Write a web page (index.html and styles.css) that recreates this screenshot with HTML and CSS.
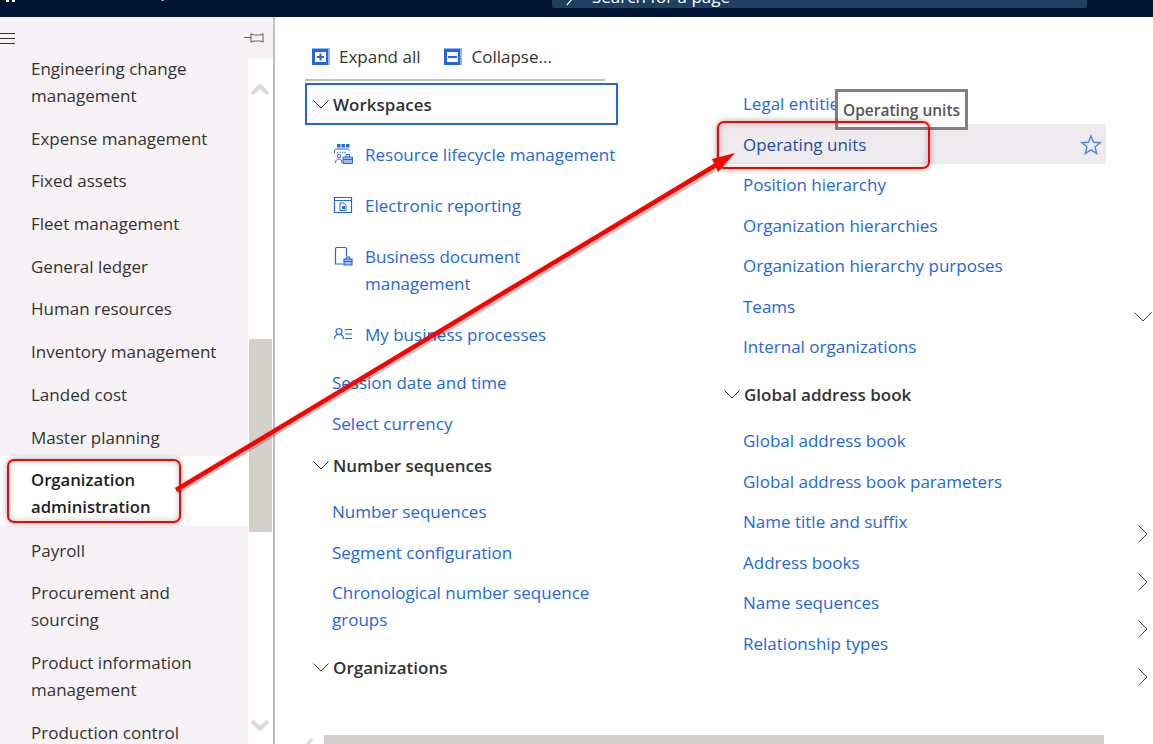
FILE: index.html
```html
<!DOCTYPE html>
<html lang="en">
<head>
<meta charset="utf-8">
<title>Organization administration</title>
<link rel="stylesheet" href="styles.css">
</head>
<body>
<div class="app">
  <header class="topbar">
    <div class="waffle"><i></i><i></i></div>
    <div class="brand">Finance and Operations</div>
    <div class="search">
      <svg class="search-ic" width="8" height="8" viewBox="0 0 8 8"><path d="M1 7 6 1" stroke="#fff" stroke-width="1.2" fill="none"/></svg>
      <span>Search for a page</span>
    </div>
  </header>
  <div class="main">
    <nav class="nav">
      <div class="nav-head">
        <svg width="16" height="12" viewBox="0 0 16 12"><path d="M0 1.500h15M0 6.500h15M0 11.500h15" stroke="#333" stroke-width="1" fill="none"/></svg>
        <svg width="20" height="12" viewBox="0 0 20 12"><path d="M0 6h7M7 2.500 10 3.500h6l3-1v8l-3-1h-6l-3 1z" stroke="#666" stroke-width="1.100" fill="none" transform="translate(0 -.5)"/></svg>
      </div>
      <div class="nav-body">
        <ul class="modules">
          <li>Engineering change management</li>
          <li>Expense management</li>
          <li>Fixed assets</li>
          <li>Fleet management</li>
          <li>General ledger</li>
          <li>Human resources</li>
          <li>Inventory management</li>
          <li>Landed cost</li>
          <li>Master planning</li>
          <li class="active">Organization administration</li>
          <li>Payroll</li>
          <li>Procurement and sourcing</li>
          <li>Product information management</li>
          <li>Production control</li>
        </ul>
        <div class="vscroll">
          <svg class="vs-up" width="20" height="14" viewBox="0 0 20 14"><path d="M2 12 10 4l8 8" stroke="#dedbd6" stroke-width="4" fill="none"/></svg>
          <div class="vs-thumb"></div>
          <svg class="vs-down" width="20" height="14" viewBox="0 0 20 14"><path d="M2 2l8 8 8-8" stroke="#dedbd6" stroke-width="4" fill="none"/></svg>
        </div>
      </div>
    </nav>
    <section class="content">
      <div class="toolbar">
        <button class="tool">
          <svg width="18" height="17" viewBox="0 0 18 17"><path d="M0 0h18v17H0z" fill="#8fb3f0"/><path d="M0 1h16v16H0z" fill="#2266e3"/><path d="M3 4h11v10H3z" fill="#fff"/><path d="M8.500 5.500v7M5 9h7" stroke="#2266e3" stroke-width="2"/></svg>
          Expand all
        </button>
        <button class="tool">
          <svg width="18" height="17" viewBox="0 0 18 17"><path d="M0 0h18v17H0z" fill="#8fb3f0"/><path d="M0 1h16v16H0z" fill="#2266e3"/><path d="M3 4h11v10H3z" fill="#fff"/><path d="M4 9h9" stroke="#2266e3" stroke-width="2"/></svg>
          Collapse...
        </button>
      </div>
      <div class="rule"></div>
      <div class="columns">
        <div class="col col-left">
          <div class="group-head focus"><svg class="caret" width="16" height="9" viewBox="0 0 16 9"><path d="M.5.500 8 8 15.500.5" stroke="#333" fill="none"/></svg>Workspaces</div>
          <a class="link ws">
            <svg width="20" height="20" viewBox="0 0 20 20" fill="none" stroke="#2266e3"><path d="M4 0h3.500v3.500H4zM8.500 0H12v3.500H8.500zM13 0h3.500v3.500H13z" fill="#2266e3" stroke="none"/><path d="M1.500 9V7c0-1 1-2 2-2h11c1 0 2 1 2 2" /><path d="M4 8.500h1M6.500 8.500h1M9 8.500h1M11.500 8.500h1" stroke-width="1.500"/><circle cx="6" cy="12" r="1.800"/><path d="M2.500 19c0-3 1.500-4 3.500-4s3 1 3 4"/><path d="M10 13h9.500v6.500H10z" fill="#9dbcf2"/><path d="M13 13v-2.500h3.500V13M10 15.500h9.500"/></svg>
            <span>Resource lifecycle management</span>
          </a>
          <a class="link ws">
            <svg width="20" height="20" viewBox="0 0 20 20" fill="none" stroke="#2266e3"><path d="M1.500 2.500h17v15h-17zM1.500 5.500h17" stroke-width="1.200"/><path d="M7 8h4l2 2v5.500H7z"/><path d="M9 11h3v3H9z" fill="#2266e3" stroke="none"/></svg>
            <span>Electronic reporting</span>
          </a>
          <a class="link ws">
            <svg width="20" height="20" viewBox="0 0 20 20" fill="none" stroke="#2266e3" stroke-width="1.200"><path d="M10 18H2.500V3c0-1 .5-1.500 1.500-1.500h8c1 0 1.500.5 1.500 1.500v7"/><path d="M11 13h8v6h-8z" fill="#9dbcf2"/><path d="M13.500 13v-2h3v2M11 15.500h8"/></svg>
            <span>Business document management</span>
          </a>
          <a class="link ws">
            <svg width="20" height="20" viewBox="0 0 20 20" fill="none" stroke="#2266e3" stroke-width="1.200"><circle cx="6" cy="7.500" r="3"/><path d="M1.500 15c0-3 2-4.500 4.500-4.500s4.500 1.500 4.500 4.500M12 5.500h7M12 10h7M12 14.500h7"/></svg>
            <span>My business processes</span>
          </a>
          <a class="link">Session date and time</a>
          <a class="link">Select currency</a>
          <div class="group-head tight"><svg class="caret" width="16" height="9" viewBox="0 0 16 9"><path d="M.5.500 8 8 15.500.5" stroke="#333" fill="none"/></svg>Number sequences</div>
          <a class="link">Number sequences</a>
          <a class="link">Segment configuration</a>
          <a class="link">Chronological number sequence groups</a>
          <div class="group-head"><svg class="caret" width="16" height="9" viewBox="0 0 16 9"><path d="M.5.500 8 8 15.500.5" stroke="#333" fill="none"/></svg>Organizations</div>
        </div>
        <div class="col col-right">
          <a class="link">Legal entities</a>
          <a class="link hover">Operating units
            <svg class="star" width="22" height="22" viewBox="0 0 22 22"><path d="M11 2l2.500 6.300 6.700.4-5.200 4.300 1.700 6.500L11 15.900l-5.700 3.600L7 13 1.800 8.700l6.700-.4z" fill="none" stroke="#4f86e8" stroke-width="1.400"/></svg>
          </a>
          <a class="link">Position hierarchy</a>
          <a class="link">Organization hierarchies</a>
          <a class="link">Organization hierarchy purposes</a>
          <a class="link">Teams</a>
          <a class="link">Internal organizations</a>
          <div class="group-head"><svg class="caret" width="16" height="9" viewBox="0 0 16 9"><path d="M.5.500 8 8 15.500.5" stroke="#333" fill="none"/></svg>Global address book</div>
          <a class="link">Global address book</a>
          <a class="link">Global address book parameters</a>
          <a class="link">Name title and suffix</a>
          <a class="link">Address books</a>
          <a class="link">Name sequences</a>
          <a class="link">Relationship types</a>
        </div>
      </div>
      <div class="hscroll">
        <svg class="hs-left" width="16" height="10" viewBox="0 0 16 10"><path d="M12 1 5 9" stroke="#dedbd6" stroke-width="3" fill="none"/></svg>
        <div class="hs-thumb"></div>
      </div>
    </section>
  </div>

  <div class="tooltip">Operating units</div>
  <svg class="edge-ic edge-down" width="18" height="10" viewBox="0 0 18 10"><path d="M.5.500 9 9l8.500-8.500" stroke="#444" fill="none"/></svg>
  <svg class="edge-ic edge-1" width="10" height="18" viewBox="0 0 10 18"><path d="M.5.500 9 9 .5 17.500" stroke="#444" fill="none"/></svg>
  <svg class="edge-ic edge-2" width="10" height="18" viewBox="0 0 10 18"><path d="M.5.500 9 9 .5 17.500" stroke="#444" fill="none"/></svg>
  <svg class="edge-ic edge-3" width="10" height="18" viewBox="0 0 10 18"><path d="M.5.500 9 9 .5 17.500" stroke="#444" fill="none"/></svg>
  <svg class="edge-ic edge-4" width="10" height="18" viewBox="0 0 10 18"><path d="M.5.500 9 9 .5 17.500" stroke="#444" fill="none"/></svg>

  <div class="callout callout-nav"></div>
  <div class="callout callout-link"></div>
  <svg class="arrow" width="1153" height="744" viewBox="0 0 1153 744">
    <path d="M176 490 714 167" stroke="#000" stroke-opacity=".22" stroke-width="5" fill="none" transform="translate(1 2)"/>
    <path d="M176 490 716 165" stroke="#fe0000" stroke-width="4.500" fill="none"/>
    <path d="M735 153 712 159 718 172z" fill="#fe0000"/>
  </svg>
</div>
</body>
</html>
```

FILE: styles.css
```css
* { box-sizing: border-box; }
html, body { margin: 0; height: 100%; background: #fff; }
body { font-family: "Open Sans", "Noto Sans", sans-serif; font-size: 17px; color: #333; overflow: hidden; }
.app { position: relative; width: 1153px; height: 744px; display: flex; flex-direction: column; overflow: hidden; }

.topbar { height: 17px; flex: none; background: #001533; color: #fff; display: flex; align-items: flex-end; overflow: hidden; }
.waffle { display: flex; gap: 3px; margin: 0 0 15px 6px; width: 10px; flex: none; }
.waffle i { width: 3px; height: 2px; background: #fff; flex: none; }
.brand { margin: 0 13px 16px 31px; width: 492px; flex: none; font-size: 17px; line-height: 20px; }
.search { width: 535px; height: 24px; margin-bottom: 9.500px; background: #1f3f63; border-radius: 2px; display: flex; align-items: flex-end; flex: none; font-size: 17px; line-height: 20px; padding-left: 10px; }
.search-ic { margin: 0 18px 2px 4px; flex: none; }
.search span { margin-bottom: 1px; }

.main { flex: 1; display: flex; min-height: 0; }
.nav { width: 275px; flex: none; border-right: 2px solid #c0bebe; background: #f6f2f6; display: flex; flex-direction: column; }
.nav-head { height: 42px; flex: none; display: flex; justify-content: space-between; align-items: center; padding: 0 9px 0 0; }
.nav-body { flex: 1; display: flex; min-height: 0; overflow: hidden; }
.modules { list-style: none; margin: -4px 0 0; padding: 0; width: 248px; flex: none; font-size: 17px; line-height: 27px; color: #333; }
.modules li { padding: 0 20px 15.700px 31px; }
.modules li.active { background: #fff; font-size: 16.700px; font-weight: 600; color: #201f1e; padding-top: 10px; padding-bottom: 5.500px; margin-top: -10px; }
.modules li.active + li { margin-top: 11px; }
.vscroll { width: 25px; flex: none; background: #fff; position: relative; }
.vs-up { position: absolute; left: 2px; top: 23px; }
.vs-thumb { position: absolute; left: 1px; right: 1px; top: 280px; height: 193px; background: #d4d1cc; }
.vs-down { position: absolute; left: 2px; top: 660px; }

.content { flex: 1; min-width: 0; padding-left: 30px; position: relative; }
.toolbar { height: 62px; display: flex; align-items: center; gap: 24px; padding: 27px 0 11px 7px; }
.tool { border: 0; background: none; padding: 0; font: inherit; font-size: 17px; color: #333; display: flex; align-items: center; gap: 9px; }
.rule { width: 300px; height: 2px; background: #bfbfbf; }
.columns { display: flex; margin-top: 2px; }
.col-left { width: 313px; flex: none; }
.col-right { width: 390px; flex: none; margin-left: 98px; margin-top: .250px; }

.group-head { display: flex; align-items: center; gap: 4px; padding: 13.750px 0 12.750px 8px; line-height: 27px; font-size: 17px; font-weight: 600; color: #333; }
.group-head.tight { padding-top: 8.250px; padding-bottom: 12.750px; }
.group-head.focus { height: 42px; padding: 1px 0 0 6px; border: 2px solid #2266e3; margin-bottom: 3.500px; }
.caret { flex: none; }
.link { display: block; padding: 6.750px 0 6.750px 27px; font-size: 17px; line-height: 27px; color: #2266e3; text-decoration: none; position: relative; }
.link.ws { display: flex; gap: 12px; align-items: flex-start; padding: 12px 0 12px 28px; }
.link.ws svg { flex: none; margin-top: 3px; }
.link.ws + .link:not(.ws) { margin-top: 3px; }
.link.hover { background: #eeeaee; color: #1e4aa8; }
.star { position: absolute; right: 4px; top: 10px; }

.hscroll { position: absolute; left: 25px; right: 0; top: 718px; height: 12px; display: flex; }
.hs-left { margin-top: 3px; flex: none; }
.hs-thumb { position: absolute; left: 24px; width: 780px; top: 0; height: 10px; background: #d4d1cc; }

.tooltip { position: absolute; left: 835px; top: 89px; width: 133px; height: 41px; border: 3px solid #808080; background: #fff; color: #555; font-size: 15.500px; font-weight: 600; line-height: 36px; padding-left: 5px; white-space: nowrap; }
.edge-ic { position: absolute; }
.edge-down { left: 1134px; top: 312px; }
.edge-1 { left: 1138px; top: 525px; }
.edge-2 { left: 1138px; top: 573px; }
.edge-3 { left: 1138px; top: 620px; }
.edge-4 { left: 1138px; top: 668px; }

.callout { position: absolute; border: 2px solid #fe0000; border-radius: 7px; box-shadow: 0 0 6px rgba(0,0,0,.35), inset 0 0 6px rgba(0,0,0,.25); }
.callout-nav { left: 7px; top: 459px; width: 174px; height: 64px; }
.callout-link { left: 717px; top: 121px; width: 213px; height: 48px; }
.arrow { position: absolute; left: 0; top: 0; pointer-events: none; }
```
